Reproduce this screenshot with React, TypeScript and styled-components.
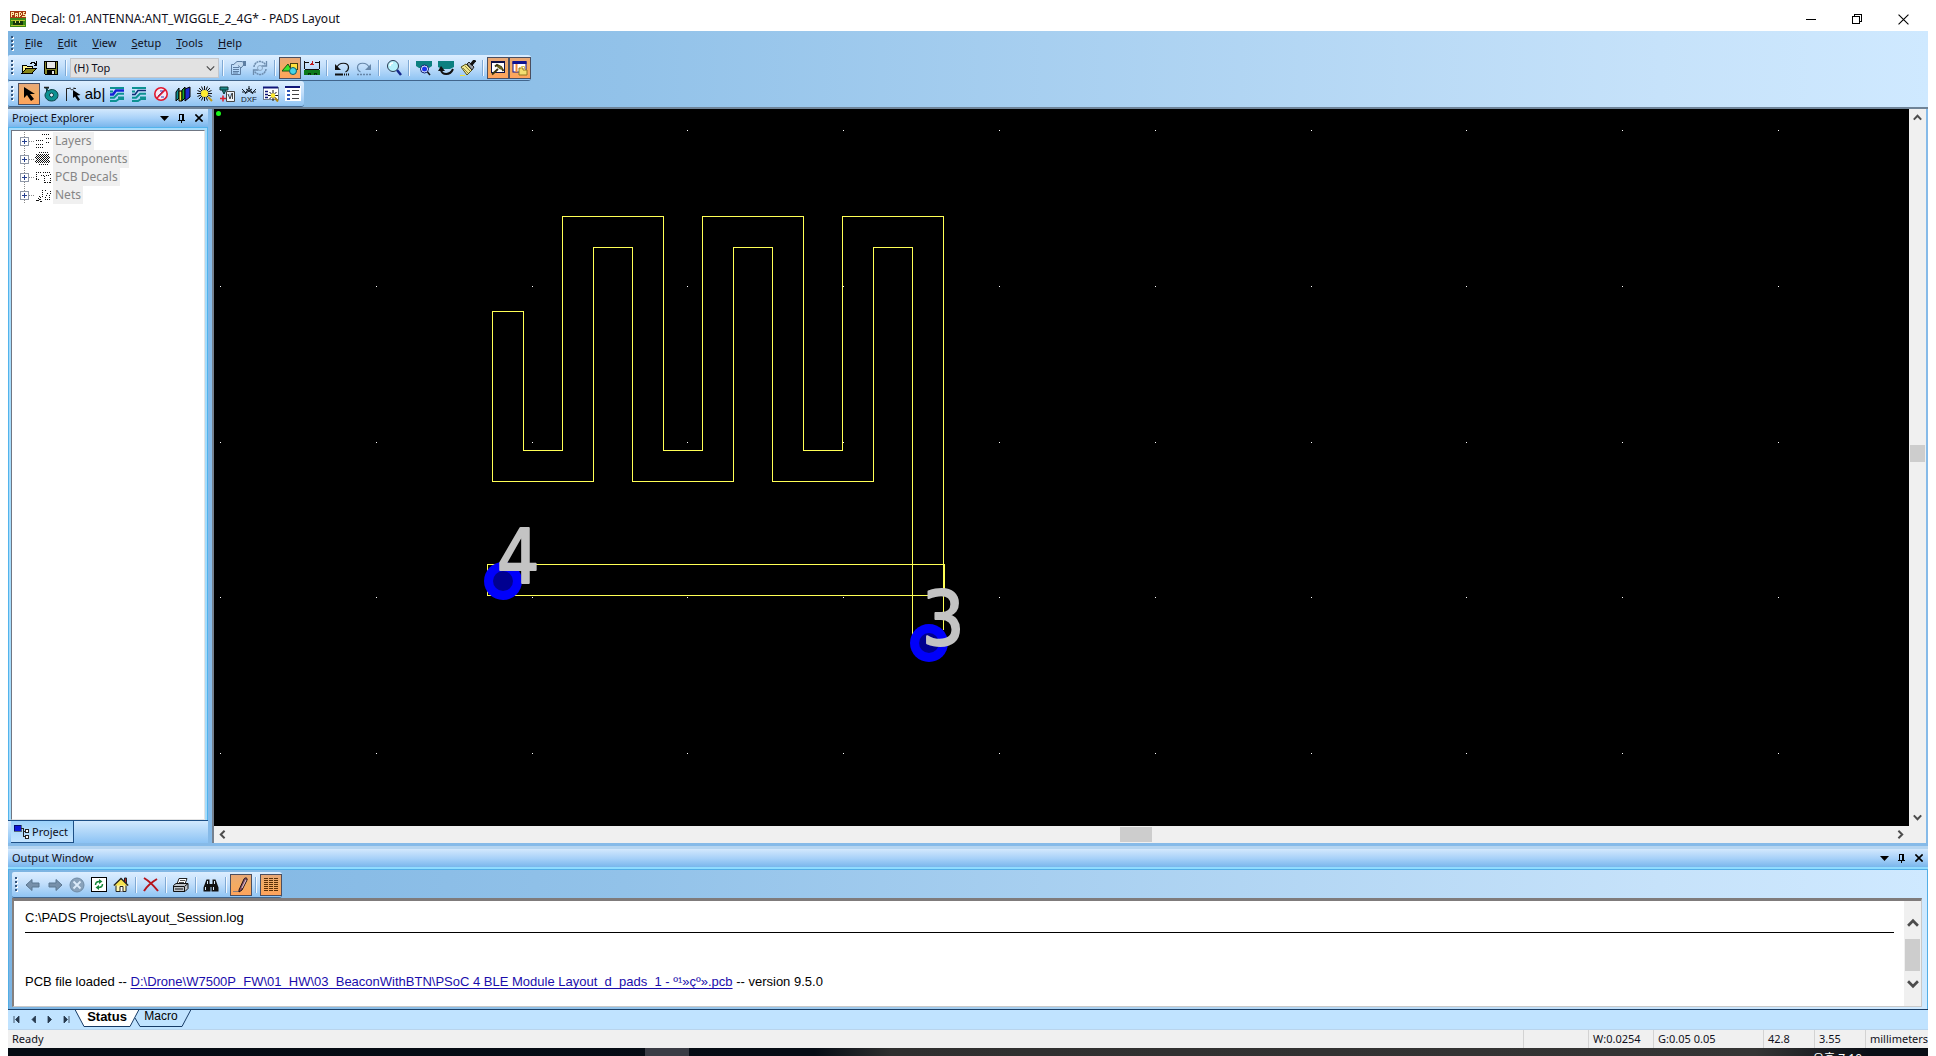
import React from "react";
import styled, { createGlobalStyle, css } from "styled-components";

const ui = `"Noto Sans", "Open Sans", sans-serif`;
const arial = `"Liberation Sans", Arial, sans-serif`;
const barFill = "linear-gradient(#dceeff 0%, #c3dffb 45%, #8fc4f3 100%)";
const frameFill = "linear-gradient(90deg, #7db4e2 0%, #92c2e9 32%, #c6e2fa 86%, #cfe9ff 100%)";
const hotFill = "linear-gradient(#e8a877 0%, #f3ac62 50%, #ffa35c 100%)";

const Global = createGlobalStyle`
  * { box-sizing: border-box; }
  body { margin: 0; background: #fff; font: 11px/16px ${ui}; color: #101020; }
  button, select { font: inherit; color: inherit; margin: 0; padding: 0; border: 0; background: none; }
  svg { display: block; flex: none; }
`;

const Desktop = styled.div`
  height: 100vh;
  display: flex;
  flex-direction: column;
  padding: 0 8px;
  overflow: hidden;
`;

const TitleBar = styled.header`
  display: flex;
  align-items: center;
  height: 31px;
  flex: none;
  padding: 7px 2px 0 2px;
`;
const Title = styled.h1`
  flex: 1;
  margin: 0 0 0 5px;
  font-size: 12px;
  font-weight: 400;
  line-height: 16px;
`;
const WindowButton = styled.button`
  width: 46px;
  height: 24px;
  display: grid;
  place-items: center;
`;

const Frame = styled.div`
  flex: none;
  background: ${frameFill};
  border-bottom: 2px solid #6f8397;
`;
const MenuBar = styled.nav`
  display: flex;
  align-items: center;
  height: 24px;
`;
const MenuItem = styled.button`
  padding: 0 8px 0 7px;
  line-height: 20px;
`;
const Bar = styled.div`
  display: flex;
  align-items: center;
  width: max-content;
  height: 26px;
  border-radius: 2px 3px 3px 2px;
  background: ${barFill};
  border-bottom: 1px solid #41658c;
`;
const GripBox = styled.span`
  width: 10px;
  display: flex;
  justify-content: center;
  flex: none;
`;
const ToolButton = styled.button<{ $hot?: boolean }>`
  width: 22px;
  height: 22px;
  display: grid;
  place-items: center;
  flex: none;
  ${(p) =>
    p.$hot &&
    css`
      background: ${hotFill};
      border: 1px solid #4b4f60;
    `}
`;
const Divider = styled.span`
  width: 8px;
  height: 16px;
  flex: none;
  background: linear-gradient(90deg, transparent 3px, #7fa9d4 3px 4px, #f3f9ff 4px 5px, transparent 5px);
`;
const LayerPicker = styled.label`
  position: relative;
  width: 149px;
  height: 20px;
  flex: none;
`;
const LayerSelect = styled.select`
  appearance: none;
  width: 100%;
  height: 100%;
  padding: 0 0 0 3px;
  background: #e2e2e2;
  border: 1px solid #c2c6cc;
  line-height: 18px;
`;
const LayerArrow = styled.span`
  position: absolute;
  right: 4px;
  top: 6px;
  pointer-events: none;
`;

const Workspace = styled.main`
  flex: 1;
  min-height: 0;
  display: flex;
  background: #86bae8;
`;
const Explorer = styled.aside`
  width: 200px;
  flex: none;
  margin-bottom: 3px;
  display: flex;
  flex-direction: column;
`;
const Caption = styled.div`
  display: flex;
  align-items: center;
  height: 18px;
  flex: none;
  padding: 0 1px 0 4px;
  background: linear-gradient(#d3e8fd 0%, #a9d2f9 50%, #79b6ec 100%);
`;
const CaptionText = styled.h2`
  flex: 1;
  margin: 0;
  font-size: 11px;
  font-weight: 400;
  line-height: 16px;
`;
const CaptionButton = styled.button`
  width: 17px;
  height: 16px;
  display: grid;
  place-items: center;
`;
const TreeFrame = styled.div`
  flex: 1;
  min-height: 0;
  padding: 2px 2px 0;
  border: 1px solid #52b4ec;
  border-bottom: 0;
  background: #a6dcfc;
  display: flex;
`;
const Tree = styled.ul`
  flex: 1;
  margin: 0;
  padding: 1px 0 0 8px;
  list-style: none;
  background: #fff;
  border: 1px solid #6f7683;
  border-right-color: #e4e4e4;
  border-bottom-color: #e4e4e4;
`;
const TreeItem = styled.li`
  display: flex;
  align-items: center;
  height: 18px;
`;
const TreeLabel = styled.span`
  margin-left: 1px;
  padding: 0 2px;
  font-size: 12px;
  line-height: 18px;
  color: #858585;
  background: #f0f0f0;
`;
const ExplorerTabs = styled.div`
  display: flex;
  height: 23px;
  flex: none;
  padding-left: 3px;
  border-top: 1px solid #1d4f86;
  background: linear-gradient(#d2e9fe, #8cc3f4);
`;
const ExplorerTab = styled.button`
  display: flex;
  align-items: center;
  width: 63px;
  padding-left: 3px;
  gap: 2px;
  background: linear-gradient(#9cd2fa, #c4e4ff);
  border: solid #1d4f86;
  border-width: 0 1px 1px 0;
`;

const Editor = styled.section`
  flex: 1;
  min-width: 0;
  margin: 0 2px 3px 4px;
  display: grid;
  grid-template-columns: 1fr 17px;
  grid-template-rows: 1fr 17px;
  border-left: 2px solid #75818f;
  background: #f0f0f0;
`;
const Board = styled.div`
  min-width: 0;
  min-height: 0;
  overflow: hidden;
  background: #000;
`;
const BoardDrawing = styled.svg`
  width: 100%;
  height: 100%;
`;
const PadNumber = styled.text`
  font: 74px "DejaVu Sans Condensed", "DejaVu Sans", sans-serif;
  fill: #c3c3c3;
  stroke: #c3c3c3;
  stroke-width: 2px;
  stroke-linejoin: round;
`;
const Scroll = styled.div<{ $across?: boolean }>`
  display: flex;
  flex-direction: ${(p) => (p.$across ? "row" : "column")};
  align-items: center;
  background: #f0f0f0;
`;
const ScrollEnd = styled.button`
  width: 17px;
  height: 17px;
  flex: none;
  display: grid;
  place-items: center;
`;
const Space = styled.span<{ $share: number }>`
  flex: ${(p) => p.$share} 0 0;
`;
const Thumb = styled.span<{ $w: number; $h: number }>`
  width: ${(p) => p.$w}px;
  height: ${(p) => p.$h}px;
  flex: none;
  background: #cdcdcd;
`;

const Output = styled.section`
  flex: none;
  padding-top: 3px;
  background: #b5d5f1;
`;
const OutputFrame = styled.div`
  padding: 2px 5px 2px 3px;
  border: solid #52aee6;
  border-width: 1px 1px 0;
  background: ${frameFill};
`;
const FrameLight = styled.div`
  height: 2px;
  background: #8fdcff;
`;
const LogBox = styled.div`
  display: flex;
  height: 109px;
  border: solid #c9c9c9;
  border-width: 3px 1px 1px 2px;
  border-top-color: #7f7b7b;
  border-left-color: #85807f;
  background: #fff;
`;
const LogText = styled.div`
  flex: 1;
  padding: 8px 10px 0 11px;
  font: 13px/17px ${arial};
  color: #000;
`;
const LogLine = styled.p`
  margin: 0;
`;
const LogRule = styled.hr`
  margin: 6px 0 40px;
  border: 0;
  border-top: 1px solid #000;
`;
const LogLink = styled.a`
  color: #1a0dab;
  text-decoration: underline;
  text-underline-offset: 2px;
  text-decoration-skip-ink: none;
`;
const LogScroll = styled.div`
  width: 17px;
  padding: 13px 0 14px;
  display: flex;
  flex-direction: column;
  align-items: center;
  background: #f0f0f0;
`;

const SheetTabs = styled.div`
  display: flex;
  height: 21px;
  border-top: 1px solid #1c3f66;
  border-bottom: 1px solid #b9d4ec;
  background: #c0e3ff;
`;
const SheetNav = styled.button`
  width: 17px;
  height: 19px;
  display: grid;
  place-items: center;
`;
const SheetTab = styled.button<{ $width: number; $active?: boolean }>`
  position: relative;
  width: ${(p) => p.$width}px;
  height: 17px;
  margin-right: -8px;
  padding-bottom: 4px;
  z-index: ${(p) => (p.$active ? 1 : 0)};
  font: ${(p) => (p.$active ? "bold 13px" : "12px")} / 13px ${arial};
  color: #000;
`;
const SheetShape = styled.svg`
  position: absolute;
  inset: 0;
  z-index: -1;
`;
const NavGroup = styled.div`
  display: flex;
  width: 67px;
`;

const StatusBar = styled.footer`
  display: flex;
  height: 18px;
  flex: none;
  padding-left: 4px;
  background: #f0f0f0;
  line-height: 18px;
`;
const StatusText = styled.span`
  flex: 1;
`;
const StatusCell = styled.span<{ $width: number }>`
  width: ${(p) => p.$width}px;
  padding-left: 4px;
  border-left: 1px solid #d3d3d3;
  white-space: nowrap;
`;
const Taskbar = styled.div`
  display: flex;
  justify-content: flex-end;
  height: 8px;
  flex: none;
  overflow: hidden;
  background:
    linear-gradient(#3a3c45, #3a3c45) 637px 0 / 44px 8px no-repeat,
    linear-gradient(90deg, #050b13 0%, #060c15 42%, #2f2f2f 46%, #353535 91%, #0a0e16 97%, #0a0e16 100%);
`;
const Clock = styled.span`
  padding: 3px 66px 0 0;
  font: 12px/16px "Noto Sans", "Noto Sans CJK KR", sans-serif;
  color: #fff;
`;

/* ---- small drawings ---- */

type Kids = { children: React.ReactNode; w?: number; h?: number; smooth?: boolean };
const Ic = ({ children, w = 16, h = 16, smooth }: Kids) => (
  <svg width={w} height={h} viewBox={`0 0 ${w} ${h}`} fill="none" shapeRendering={smooth ? "auto" : "crispEdges"}>
    {children}
  </svg>
);

const Grip = () => (
  <GripBox>
    <Ic w={4} h={15}>
      {[0, 4, 8, 12].map((y) => (
        <g key={y}>
          <rect x="1" y={y + 1} width="2" height="2" fill="#fff" />
          <rect x="0" y={y} width="2" height="2" fill="#33557d" />
        </g>
      ))}
    </Ic>
  </GripBox>
);

const Chevron = ({ turn = 0, size = 9, weight = 2 }: { turn?: number; size?: number; weight?: number }) => (
  <svg width={size} height={size} viewBox="0 0 9 9" fill="none">
    <path d="M0.8 6.6 4.5 2.8 8.2 6.6" stroke="#4c4c4c" strokeWidth={weight} transform={`rotate(${turn} 4.5 4.5)`} />
  </svg>
);

const AppIcon = () => (
  <Ic>
    <rect width="16" height="16" fill="#a83a12" />
    <path d="M1 1h2v2h-2zM1 1v5M5 6V2h2v4M5 4h2M9 1v4h1l1-1V2l-1-1zM15 1.500h-2v2h2v2h-3" stroke="#ffe9a8" strokeWidth="1" />
    <rect y="7" width="16" height="9" fill="#3b8a18" />
    <path d="M1 9h14M1 14h14" stroke="#b3c72e" />
    <rect x="3" y="10" width="10" height="4" fill="#16380c" />
    <rect x="5" y="10" width="1" height="2" fill="#e3de5b" />
    <rect x="9" y="10" width="1" height="2" fill="#e3de5b" />
  </Ic>
);

const OpenIcon = () => (
  <Ic>
    <path d="M1 13V5h4l1 1h5v3" fill="#fff38c" stroke="#000" />
    <path d="M1 13.500 5 8.500h10L11 13.500z" fill="#87861a" stroke="#000" />
    <path d="M9 3.500h1l1-1h2l2 2M15.500 1v4h-3" stroke="#000" />
  </Ic>
);
const SaveIcon = () => (
  <Ic>
    <path d="M1.500 1.500h13v13H2.500l-1-1z" fill="#85862a" stroke="#000" />
    <rect x="4" y="2" width="8" height="6" fill="#e8e8e8" />
    <path d="M3.500 2v6.500h9V2" stroke="#000" />
    <rect x="4" y="10" width="8" height="4" fill="#000" />
    <rect x="9" y="11" width="2" height="3" fill="#e8e8e8" />
  </Ic>
);
const PropsIcon = () => (
  <Ic smooth>
    <path d="M1.500 4.500h9v10h-9zM3 7.500h6M3 9.500h6M3 11.500h6M3 13h5" stroke="#5e7ea2" />
    <path d="M3 5 7 1.500h5L15 3.500 11 8 8 5.500" fill="#c3daf0" stroke="#5e7ea2" />
    <rect x="13" y="1" width="3" height="5" fill="#5e7ea2" />
  </Ic>
);
const CycleIcon = () => (
  <Ic smooth>
    <path d="M2 7a6 6 0 0 1 10-4l2 2M14 9a6 6 0 0 1-10 4l-2-2" stroke="#6c8cae" strokeWidth="1.500" strokeDasharray="2 .6" />
    <path d="M14.500 1v5h-5M1.500 15v-5h5" stroke="#6c8cae" strokeWidth="1.300" />
    <circle cx="8" cy="8" r="2.500" stroke="#8aa7c4" />
  </Ic>
);
const ShapesIcon = () => (
  <Ic smooth>
    <path d="M0 11 6 4l4 7z" fill="#39e62c" stroke="#1d4f12" />
    <rect x="8.500" y="3.500" width="7" height="6" fill="#ffe03b" stroke="#4a4210" />
    <circle cx="11" cy="11" r="3.500" fill="#45d5e8" stroke="#115e6b" />
  </Ic>
);
const BoardIcon = () => (
  <Ic>
    <path d="M.5 1v8M15.500 1v8M0 2.500h5M11 2.500h5M1 9.500h14" stroke="#101010" />
    <path d="M8 1v2M6 4.500h4M7 3.500h2" stroke="#c01818" />
    <rect y="10" width="16" height="5" fill="#0c7a1c" />
    <path d="M4 15v-2h2v2M10 15v-2h2v2" stroke="#032b08" />
  </Ic>
);
const UndoIcon = () => (
  <Ic smooth>
    <path d="M2.500 8C5 1.500 14.500 2 14.500 7.500c0 2.500-1 3.500-3 4.500" stroke="#111" strokeWidth="1.200" />
    <path d="M1 4v6h6z" fill="#111" />
    <path d="M1 14.500h8" stroke="#111" strokeWidth="2" />
    <path d="M10 14.500h6" stroke="#111" strokeWidth="2" strokeDasharray="1 1" />
  </Ic>
);
const RedoIcon = () => (
  <Ic smooth>
    <g transform="matrix(-1 0 0 1 16 0)">
      <path d="M2.500 8C5 1.500 14.500 2 14.500 7.500c0 2.500-1 3.500-3 4.500" stroke="#6787a9" strokeWidth="1.200" />
      <path d="M1 4v6h6z" fill="#6787a9" />
      <path d="M1 14.500h14" stroke="#6787a9" strokeWidth="1.500" strokeDasharray="2 1" />
    </g>
  </Ic>
);
const ZoomIcon = () => (
  <Ic smooth>
    <circle cx="7" cy="6" r="5.500" fill="#b5f1fb" stroke="#27384f" />
    <path d="M4 6a3 3 0 0 1 3-3" stroke="#fff" strokeWidth="1.500" />
    <path d="m11 10 4 5" stroke="#14288c" strokeWidth="2.500" />
  </Ic>
);
const ViewBoardIcon = () => (
  <Ic smooth>
    <path d="M0 1h16v5l-3 2H3L0 6z" fill="#0b8080" />
    <circle cx="8.500" cy="9" r="4" fill="#e8f5ff" stroke="#0c1c70" />
    <circle cx="8.500" cy="9" r="2.500" fill="#1d34e8" />
    <path d="m11.500 12 2.500 3" stroke="#111" strokeWidth="1.500" />
  </Ic>
);
const RefreshBoardIcon = () => (
  <Ic smooth>
    <path d="M0 1h16v6l-4 2H4L0 7z" fill="#0b8080" />
    <path d="M3 10c1 5 9 6 12-1" stroke="#111" strokeWidth="2" />
    <path d="M0 11 3 6l4 5z" fill="#111" />
  </Ic>
);
const BrushIcon = () => (
  <Ic smooth>
    <path d="M1 7 6 4l6 6-5 5z" fill="#efe68d" stroke="#555018" />
    <path d="M3 8l5 5M5 6l5 5" stroke="#8d8640" />
    <path d="M7 4 9 2l5 5-2 3z" fill="#9aa0a8" stroke="#222" />
    <path d="M11 5l4-5" stroke="#111" strokeWidth="3" />
    <path d="M0 15.500h5" stroke="#efe23c" />
  </Ic>
);
const OutputPaneIcon = () => (
  <Ic smooth>
    <rect x="1.500" y="2.500" width="13" height="10" fill="#fff" stroke="#0d1145" />
    <rect x="1" y="1" width="14" height="2" fill="#0d1145" />
    <path d="M2 14.500 8 9M5 6.500l2-1.500 4 2 2.500 4" stroke="#3a3711" strokeWidth="2" />
    <path d="M6.500 6.500l3-1.500 3.500 4-3 .5z" fill="#6a661f" />
  </Ic>
);
const ExplorerPaneIcon = () => (
  <Ic smooth>
    <rect x="1" y="2" width="13" height="10" fill="#fff" stroke="#0d1190" />
    <rect x="0.500" y="1" width="14" height="3" fill="#0d1190" />
    <path d="M4.500 4v8" stroke="#f08a3e" strokeWidth="2" />
    <path d="M7 8h4v2h4v5H7z" fill="#f3de70" stroke="#8e7820" />
    <path d="M9.500 9V6.500h3v3" stroke="#d9be4a" />
  </Ic>
);
const PointerIcon = () => (
  <Ic smooth>
    <path d="M3 1v11l3-3 4 6 3-2-4-5h5z" fill="#000" />
  </Ic>
);
const PadIcon = () => (
  <Ic smooth>
    <path d="M2 2h4M3.500 1v5C0 9 3 15 8.500 15S16 10 14.500 7 9 2 5 5z" fill="#0d9292" stroke="#0b3d42" />
    <circle cx="8.500" cy="9" r="2" fill="#e4f3ff" stroke="#0b3d42" />
    <path d="M1 1.500h5" stroke="#222" strokeWidth="1.500" />
  </Ic>
);
const LineIcon = () => (
  <Ic smooth>
    <path d="M1.500 15V2.500h3M5 1.500c0 3 4 3 4 0M9 2.500h2" stroke="#222" />
    <path d="M8 4v8l2-1.500 3 4.500 2-1.500-3-4 3.500-.5z" fill="#000" />
  </Ic>
);
const TextToolText = styled.span`
  font: 15px/16px ${arial};
  color: #000;
  white-space: nowrap;
`;
const CopperIcon = ({ open }: { open?: boolean }) => (
  <Ic smooth>
    <path d="M1 2h14M1 15h6l3-2h5" stroke="#0d9292" strokeWidth="2" />
    <path d="M1 8.500h3l3-4h8" stroke={open ? "#0e2b75" : "#1420d6"} strokeWidth={open ? 1.6 : 2.5} />
    <path d="M1 5.500h3" stroke="#0d9292" strokeWidth="2" />
    <path d="M1 11.800h4l4-4h6M9 11.500h6" stroke="#0d9292" strokeWidth="2" />
  </Ic>
);
const KeepoutIcon = () => (
  <Ic smooth>
    <circle cx="8" cy="8" r="6.200" fill="#f4e8f4" stroke="#e0182e" strokeWidth="1.600" />
    <path d="m5 10 5-5M7 5h4M8 11h3" stroke="#2b38b6" />
    <path d="m3.500 12.500 9-9" stroke="#e0182e" strokeWidth="1.600" />
  </Ic>
);
const LibraryIcon = () => (
  <Ic smooth>
    <path d="M1 6 4 2v10l-3 3z" fill="#0d9292" stroke="#000" />
    <path d="M4 5h3v10H4z" fill="#e9e33c" stroke="#000" />
    <path d="M7 4 10 1v11l-3 3z" fill="#15a52c" stroke="#000" />
    <path d="M10 3l5-2v10l-5 4z" fill="#1c2bd0" stroke="#000" />
  </Ic>
);
const WizardIcon = () => (
  <Ic smooth>
    <path d="M7.500 0v15M0 7.500h15M2 2l11 11M13 2 2 13M4.500.5l6 14M10.500.5l-6 14M.5 4.500l14 6M.5 10.500l14-6" stroke="#111" />
    <circle cx="7.500" cy="7.500" r="3.500" fill="#ffec2e" />
    <path d="m11 11 4 4" stroke="#c49b12" strokeWidth="2" />
  </Ic>
);
const ImportIcon = () => (
  <Ic smooth>
    <path d="M1 1h8v3H1zM3 4l2 4 2-4" fill="#1b8787" stroke="#0b3434" />
    <path d="M7.500 5.500h8v10h-8zM9 8l2 5 2-6M13.500 7v6" fill="#f0f4f8" stroke="#444" />
    <path d="M1 12.500h6M4 9.500v6" stroke="#dc1d2b" strokeWidth="1.500" />
  </Ic>
);
const DxfText = styled.text`
  font: 8px ${arial};
  fill: #16202c;
`;
const DxfIcon = () => (
  <Ic smooth>
    <path d="M8 0v2M4 8 8 2l4 6M1 3l4 4 6-4M15 3l-4 4-6-4M1 6h3M12 6h3" stroke="#111a24" />
    <DxfText x="0" y="15.500">DXF</DxfText>
  </Ic>
);
const FindListIcon = () => (
  <Ic smooth>
    <rect x="0.500" y="1.500" width="15" height="12" fill="#fff" stroke="#6f8094" />
    <path d="M0 1.500h15" stroke="#10177a" strokeWidth="2" />
    <path d="M2 5.500h3M2 8.500h3M2 11.500h3" stroke="#10177a" strokeWidth="1.500" />
    <path d="M10 4v11M5 9.500h10M6.500 6l7 7M13.500 6l-7 7" stroke="#111" />
    <circle cx="10" cy="9.500" r="2.300" fill="#ffec2e" />
    <path d="m12 12 3 3.500" stroke="#b3870b" strokeWidth="2" />
  </Ic>
);
const ListIcon = () => (
  <Ic>
    <rect width="16" height="15" fill="#fff" />
    <rect y="0" width="15" height="2" fill="#10177a" />
    {[4, 8, 12].map((y) => (
      <g key={y}>
        <rect x="2" y={y} width="3" height="2" fill="#2c56b8" />
        <rect x="7" y={y} width="7" height="1" fill="#444" />
      </g>
    ))}
  </Ic>
);

const DownIcon = () => (
  <Ic w={9} h={5} smooth>
    <path d="M0 0h9L4.500 5z" fill="#000" />
  </Ic>
);
const PinIcon = () => (
  <Ic w={7} h={9}>
    <path d="M1.500 6V.5h4V6M4.500 1v5M0 6.500h7M3.500 7v2" stroke="#000" />
  </Ic>
);
const CloseIcon = ({ size = 8, weight = 1.6 }: { size?: number; weight?: number }) => (
  <svg width={size} height={size} viewBox="0 0 8 8" fill="none">
    <path d="M.4.4 7.600 7.600M7.600.4.4 7.600" stroke="#000" strokeWidth={weight} />
  </svg>
);

const ArrowIcon = ({ right }: { right?: boolean }) => (
  <Ic smooth>
    <path
      d="M1 8 7 2.500V6h7v4H7v3.500z"
      fill="#7790aa"
      stroke="#5b7690"
      transform={right ? "matrix(-1 0 0 1 16 0)" : undefined}
    />
  </Ic>
);
const StopIcon = () => (
  <Ic smooth>
    <circle cx="8" cy="8" r="7" fill="#89a2bb" stroke="#6f8ba6" />
    <path d="m4.500 4.500 7 7M11.500 4.500l-7 7" stroke="#dcebfa" strokeWidth="1.800" />
  </Ic>
);
const ReloadIcon = () => (
  <Ic>
    <rect x=".5" y=".5" width="15" height="14" fill="#fff" stroke="#000" />
    <g shapeRendering="auto">
      <path d="M4.500 8c0-3 2-3.500 4-3.500M11.500 7c0 3-2 3.500-4 3.500" stroke="#16863a" strokeWidth="1.500" />
      <path d="M8 2v5l3.500-2.500zM8 8v5l-3.500-2.500z" fill="#16863a" />
    </g>
  </Ic>
);
const HomeIcon = () => (
  <Ic smooth>
    <path d="M11.500 5V1h2v6" fill="#c02222" stroke="#222" />
    <path d="M3 7.500h10v7H3z" fill="#fff6b0" stroke="#222" />
    <path d="M.8 8.500 8 1.500l7.200 7" fill="#f7e34f" stroke="#222" strokeWidth="1.300" />
    <path d="M7 14.500v-5h3v5" fill="#fff" stroke="#222" />
  </Ic>
);
const DeleteIcon = () => (
  <Ic smooth>
    <path d="M1 1c5 3 10 8 14 13M14 2C9 5 4 9 1 14" stroke="#b5141c" strokeWidth="2" />
  </Ic>
);
const PrintIcon = () => (
  <Ic smooth>
    <path d="M4 7 6 1.500h8L12 7" fill="#fff" stroke="#222" />
    <path d="M7 3.500h5M6 5.500h5" stroke="#222" strokeWidth=".8" />
    <path d="M.5 8.500 3 6.500h12v5l-3 3H.5z" fill="#bfc4ca" stroke="#111" />
    <path d="M.5 9.500h11v5M12 9l3-2.500M2 12h8" stroke="#111" />
  </Ic>
);
const FindIcon = () => (
  <Ic smooth>
    <path d="M3.500 2.500h3v4l1 2v6H.5v-4zM9.500 2.500h3l3 8v4h-7v-6l1-2z" fill="#111" />
    <path d="M6 7h4v3H6z" fill="#111" />
    <path d="M4.500 4v3M2.500 10v3M11.500 4v3M10.500 10v3" stroke="#d7e7f7" />
  </Ic>
);
const PenIcon = () => (
  <Ic smooth>
    <path d="M0 14.500h7" stroke="#8c7a78" />
    <path d="M6 13 11 2c1-2 4-1 3 1l-5 10-3 2z" fill="#8a5568" stroke="#1c0f16" />
    <path d="M9 11 13 3" stroke="#e8c9d3" />
  </Ic>
);
const GridIcon = () => (
  <Ic>
    {[1, 3, 5, 7, 9, 11, 13].map((y) => (
      <path key={y} d={`M1 ${y + 0.5}h4M6 ${y + 0.5}h4M11 ${y + 0.5}h4`} stroke="#5c3108" />
    ))}
  </Ic>
);

const TabTreeIcon = () => (
  <Ic>
    <rect x="0" y="1" width="7" height="6" fill="#0d18d8" stroke="#000" strokeWidth=".5" />
    <path d="M7 4.500h3M9.500 4v9M10 12.500h2M10 7.500h2" stroke="#222" />
    <rect x="11.500" y="5.500" width="3" height="3" fill="#fff" stroke="#222" />
    <rect x="11.500" y="11.500" width="3" height="3" fill="#fff" stroke="#222" />
  </Ic>
);

const PlusBox = () => (
  <Ic w={14} h={18}>
    <path d="M4.500 0v18" stroke="#8b8b8b" strokeDasharray="1 1" />
    <rect x=".5" y="5.500" width="8" height="8" fill="#fff" stroke="#8f98a8" />
    <path d="M2 9.500h5M4.500 7v5" stroke="#27408f" />
    <path d="M9 9.500h5" stroke="#8b8b8b" strokeDasharray="1 1" />
  </Ic>
);
const treeArt: Record<string, string> = {
  Layers: "M7 1.500h8M11 5.500h5M1 7.500h7M1 11.500h7M1 14.500h7M11 9.500h4",
  Components:
    "M4 1.500h10M1 3.500h14M2 4.500h12M1 5.500h14M0 6.500h15M1 7.500h14M2 8.500h12M1 9.500h14M0 10.500h15M1 11.500h14M4 13.500h10",
  "PCB Decals": "M1 9.500V3.500h6M8 3.500h7v3M5.500 6.500h4v7M9.500 13.500h6V8M1 10.500h3M11 6.500h4",
  Nets: "M2 13.500l3-4 1 5zM10 12.500h4l2-9M7.500 3v6l-3 4M10.500 3l2 3-3 8",
};
const TreeIcon = ({ name }: { name: string }) => (
  <Ic w={18}>
    <path d={treeArt[name]} stroke="#111" strokeDasharray="1 1" transform="translate(1 0)" />
  </Ic>
);

/* ---- board contents ---- */

const gridX = Array.from({ length: 11 }, (_, i) => Math.round(6 + i * 155.8));
const gridY = [21, 177, 333, 488, 644];
const antenna =
  "M698.500 542V138.500H659.500V372.500H558.500V138.500H519.500V372.500H418.500V138.500H379.500V372.500H278.500V202.500H309.500V341.500H348.500V107.500H449.500V341.500H488.500V107.500H589.500V341.500H628.500V107.500H729.500V521";

const Pad = ({ x, y }: { x: number; y: number }) => (
  <g>
    <circle cx={x} cy={y} r="19" fill="#0000fb" />
    <circle cx={x} cy={y} r="10" fill="#000090" />
  </g>
);

const BoardView = () => (
  <BoardDrawing role="img" aria-label="Antenna decal">
    <g fill="none" stroke="#ffff55" shapeRendering="crispEdges">
      <path d={antenna} />
      <rect x="273.500" y="455.500" width="457" height="31" />
    </g>
    {gridY.map((y) => gridX.map((x) => <rect key={`${x}-${y}`} x={x} y={y} width="1" height="1" fill="#fff" />))}
    <circle cx="4.500" cy="4.500" r="2.500" fill="#19f519" />
    <Pad x={289} y={472} />
    <Pad x={715} y={534} />
    <PadNumber x="283" y="474">4</PadNumber>
    <PadNumber x="708" y="536">3</PadNumber>
  </BoardDrawing>
);

/* ---- assembly ---- */

type Tool = { label: string; icon: React.ReactNode; hot?: boolean } | "|";
const Tools = ({ items }: { items: Tool[] }) => (
  <>
    {items.map((t, i) =>
      t === "|" ? (
        <Divider key={i} />
      ) : (
        <ToolButton key={i} $hot={t.hot} aria-label={t.label}>
          {t.icon}
        </ToolButton>
      )
    )}
  </>
);

const PanelCaption = ({ title }: { title: string }) => (
  <Caption>
    <CaptionText>{title}</CaptionText>
    <CaptionButton aria-label="Panel menu"><DownIcon /></CaptionButton>
    <CaptionButton aria-label="Pin panel"><PinIcon /></CaptionButton>
    <CaptionButton aria-label="Close panel"><CloseIcon /></CaptionButton>
  </Caption>
);

const navShapes = ["M1 0v7M6 0v7L2.500 3.500z", "M5.500 0v7L2 3.500z", "M2 0v7l3.500-3.500z", "M1 0v7l3.500-3.500zM6 0v7"];

export default function App() {
  return (
    <Desktop>
      <Global />
      <TitleBar>
        <AppIcon />
        <Title>Decal: 01.ANTENNA:ANT_WIGGLE_2_4G* - PADS Layout</Title>
        <WindowButton aria-label="Minimize">
          <Ic w={10} h={10}><path d="M0 5.500h10" stroke="#000" /></Ic>
        </WindowButton>
        <WindowButton aria-label="Restore">
          <Ic w={10} h={10}><path d="M.5 2.500h7v7h-7zM2.500 2V.5h7v7H8" stroke="#000" /></Ic>
        </WindowButton>
        <WindowButton aria-label="Close"><CloseIcon size={11} weight={0.8} /></WindowButton>
      </TitleBar>

      <Frame>
        <MenuBar>
          <Grip />
          {["File", "Edit", "View", "Setup", "Tools", "Help"].map((m) => (
            <MenuItem key={m}>
              <u>{m[0]}</u>
              {m.slice(1)}
            </MenuItem>
          ))}
        </MenuBar>
        <Bar>
          <Grip />
          <Tools items={[{ label: "Open", icon: <OpenIcon /> }, { label: "Save", icon: <SaveIcon /> }, "|"]} />
          <LayerPicker>
            <LayerSelect aria-label="Layer" defaultValue="top">
              <option value="top">(H) Top</option>
            </LayerSelect>
            <LayerArrow><Chevron turn={180} weight={1.2} /></LayerArrow>
          </LayerPicker>
          <Tools
            items={[
              "|",
              { label: "Properties", icon: <PropsIcon /> },
              { label: "Cycle", icon: <CycleIcon /> },
              "|",
              { label: "Drafting", icon: <ShapesIcon />, hot: true },
              { label: "Board", icon: <BoardIcon /> },
              "|",
              { label: "Undo", icon: <UndoIcon /> },
              { label: "Redo", icon: <RedoIcon /> },
              "|",
              { label: "Zoom", icon: <ZoomIcon /> },
              "|",
              { label: "View board", icon: <ViewBoardIcon /> },
              { label: "Refresh board", icon: <RefreshBoardIcon /> },
              { label: "Redraw", icon: <BrushIcon /> },
              "|",
              { label: "Output window", icon: <OutputPaneIcon />, hot: true },
              { label: "Project explorer", icon: <ExplorerPaneIcon />, hot: true },
            ]}
          />
        </Bar>
        <Bar>
          <Grip />
          <Tools
            items={[
              { label: "Select", icon: <PointerIcon />, hot: true },
              { label: "Terminal", icon: <PadIcon /> },
              { label: "2D line", icon: <LineIcon /> },
              { label: "Text", icon: <TextToolText>ab|</TextToolText> },
              { label: "Copper", icon: <CopperIcon /> },
              { label: "Copper cut out", icon: <CopperIcon open /> },
              { label: "Keepout", icon: <KeepoutIcon /> },
              { label: "Library", icon: <LibraryIcon /> },
              { label: "Wizard", icon: <WizardIcon /> },
              { label: "Import decal", icon: <ImportIcon /> },
              { label: "Import DXF", icon: <DxfIcon /> },
              { label: "Find in list", icon: <FindListIcon /> },
              { label: "List", icon: <ListIcon /> },
            ]}
          />
        </Bar>
      </Frame>

      <Workspace>
        <Explorer>
          <PanelCaption title="Project Explorer" />
          <TreeFrame>
            <Tree>
              {["Layers", "Components", "PCB Decals", "Nets"].map((n) => (
                <TreeItem key={n}>
                  <PlusBox />
                  <TreeIcon name={n} />
                  <TreeLabel>{n}</TreeLabel>
                </TreeItem>
              ))}
            </Tree>
          </TreeFrame>
          <ExplorerTabs>
            <ExplorerTab><TabTreeIcon />Project</ExplorerTab>
          </ExplorerTabs>
        </Explorer>

        <Editor>
          <Board><BoardView /></Board>
          <Scroll>
            <ScrollEnd aria-label="Scroll up"><Chevron /></ScrollEnd>
            <Space $share={319} />
            <Thumb $w={15} $h={17} />
            <Space $share={347} />
            <ScrollEnd aria-label="Scroll down"><Chevron turn={180} /></ScrollEnd>
          </Scroll>
          <Scroll $across>
            <ScrollEnd aria-label="Scroll left"><Chevron turn={-90} /></ScrollEnd>
            <Space $share={889} />
            <Thumb $w={32} $h={15} />
            <Space $share={740} />
            <ScrollEnd aria-label="Scroll right"><Chevron turn={90} /></ScrollEnd>
          </Scroll>
        </Editor>
      </Workspace>

      <Output>
        <PanelCaption title="Output Window" />
        <FrameLight />
        <OutputFrame>
          <Bar>
            <Grip />
            <Tools
              items={[
                { label: "Back", icon: <ArrowIcon /> },
                { label: "Forward", icon: <ArrowIcon right /> },
                { label: "Stop", icon: <StopIcon /> },
                { label: "Reload", icon: <ReloadIcon /> },
                { label: "Home", icon: <HomeIcon /> },
                "|",
                { label: "Clear", icon: <DeleteIcon /> },
                "|",
                { label: "Print", icon: <PrintIcon /> },
                "|",
                { label: "Find", icon: <FindIcon /> },
                "|",
                { label: "Log", icon: <PenIcon />, hot: true },
                "|",
                { label: "Report", icon: <GridIcon />, hot: true },
              ]}
            />
          </Bar>
          <LogBox>
            <LogText>
              <LogLine>C:\PADS Projects\Layout_Session.log</LogLine>
              <LogRule />
              <LogLine>
                PCB file loaded --{" "}
                <LogLink href="#log">
                  D:\Drone\W7500P_FW\01_HW\03_BeaconWithBTN\PSoC 4 BLE Module Layout_d_pads_1 - º¹»çº».pcb
                </LogLink>{" "}
                -- version 9.5.0
              </LogLine>
            </LogText>
            <LogScroll>
              <ScrollEnd aria-label="Scroll log up"><Chevron size={12} /></ScrollEnd>
              <Space $share={7} />
              <Thumb $w={15} $h={32} />
              <Space $share={4} />
              <ScrollEnd aria-label="Scroll log down"><Chevron size={12} turn={180} /></ScrollEnd>
            </LogScroll>
          </LogBox>
        </OutputFrame>
        <SheetTabs>
          <NavGroup>
            {navShapes.map((d, i) => (
              <SheetNav key={i} aria-label={["First tab", "Previous tab", "Next tab", "Last tab"][i]}>
                <Ic w={7} h={7} smooth><path d={d} fill="#26384c" stroke="#26384c" strokeWidth=".8" /></Ic>
              </SheetNav>
            ))}
          </NavGroup>
          <SheetTab $width={64} $active>
            <SheetShape width="64" height="17" fill="#fff" stroke="#173b66">
              <path d="M0-.5 9 16.500h46L64-.5" />
            </SheetShape>
            Status
          </SheetTab>
          <SheetTab $width={60}>
            <SheetShape width="60" height="17" fill="none" stroke="#173b66">
              <path d="M4 8 9 16.500h42L60-.5" />
            </SheetShape>
            Macro
          </SheetTab>
        </SheetTabs>
      </Output>

      <StatusBar>
        <StatusText>Ready</StatusText>
        <StatusCell $width={65} />
        <StatusCell $width={65}>W:0.0254</StatusCell>
        <StatusCell $width={110}>G:0.05 0.05</StatusCell>
        <StatusCell $width={51}>42.8</StatusCell>
        <StatusCell $width={51}>3.55</StatusCell>
        <StatusCell $width={63}>millimeters</StatusCell>
      </StatusBar>
      <Taskbar><Clock>오후 7:10</Clock></Taskbar>
    </Desktop>
  );
}
